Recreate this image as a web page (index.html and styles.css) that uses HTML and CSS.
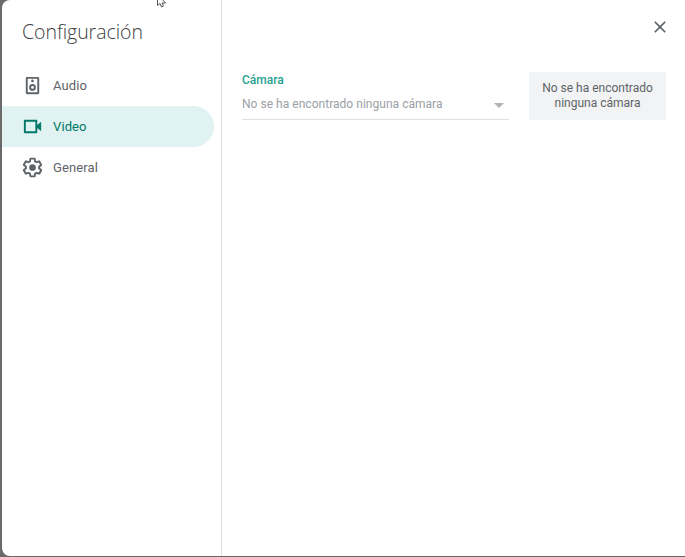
FILE: index.html
```html
<!DOCTYPE html>
<html lang="es">
<head>
<meta charset="utf-8">
<title>Configuración</title>
<link rel="stylesheet" href="styles.css">
</head>
<body>
<div class="dialog">
  <aside class="sidebar">
    <h1 class="title">Configuración</h1>
    <nav class="nav">
      <a class="nav-item">
        <svg class="icon" viewBox="0 0 24 24"><path fill="#5f6368" d="M6.500 3h11A1.500 1.500 0 0 1 19 4.500v15a1.500 1.500 0 0 1-1.500 1.500h-11A1.500 1.500 0 0 1 5 19.500v-15A1.500 1.500 0 0 1 6.500 3zM7 5v14h10V5H7zM12 5.800a1.400 1.400 0 1 1 0 2.800 1.400 1.400 0 0 1 0-2.800zM12 10.500a3.500 3.500 0 1 1 0 7 3.500 3.500 0 0 1 0-7zm0 2a1.500 1.500 0 1 0 0 3 1.500 1.500 0 0 0 0-3z" fill-rule="evenodd"/></svg>
        <span>Audio</span>
      </a>
      <a class="nav-item active">
        <svg class="icon" viewBox="0 0 24 24"><path fill="#00796b" fill-rule="evenodd" d="M4 5h12a1 1 0 0 1 1 1v4.500L21 7v10l-4-3.500V18a1 1 0 0 1-1 1H4a1 1 0 0 1-1-1V6a1 1 0 0 1 1-1zm1 2v10h10V7H5z"/></svg>
        <span>Video</span>
      </a>
      <a class="nav-item">
        <svg class="icon" viewBox="0 0 24 24"><path fill="#5f6368" d="M13.850 22.250h-3.700c-.74 0-1.360-.54-1.470-1.270l-.27-1.890c-.27-.14-.53-.29-.79-.46l-1.800.72c-.7.260-1.470-.03-1.810-.65L2.200 15.530c-.35-.66-.2-1.440.36-1.880l1.530-1.190c-.01-.15-.02-.3-.02-.46 0-.15.010-.31.020-.46l-1.520-1.190c-.59-.45-.74-1.260-.37-1.880l1.850-3.190c.34-.62 1.110-.9 1.790-.63l1.810.73c.26-.17.520-.32.780-.46l.27-1.910c.11-.7.730-1.250 1.460-1.250h3.700c.74 0 1.360.54 1.470 1.270l.27 1.890c.27.140.53.290.79.460l1.800-.72c.71-.26 1.480.03 1.820.65l1.840 3.180c.36.66.2 1.440-.36 1.880l-1.520 1.190c.01.15.02.3.02.46s-.01.310-.02.46l1.520 1.190c.56.45.72 1.230.37 1.860l-1.860 3.220c-.34.62-1.110.9-1.800.63l-1.800-.72c-.26.170-.52.320-.78.460l-.27 1.910c-.1.680-.72 1.220-1.450 1.220zm-3.230-2h2.760l.37-2.550.53-.22c.44-.18.880-.44 1.340-.78l.45-.34 2.380.96 1.380-2.400-2.030-1.580.07-.56c.03-.26.060-.51.060-.78s-.03-.53-.06-.78l-.07-.56 2.030-1.580-1.390-2.400-2.390.96-.45-.35c-.42-.32-.87-.58-1.330-.77l-.52-.22-.37-2.550h-2.760l-.37 2.550-.53.21c-.44.190-.88.440-1.340.790l-.45.330-2.380-.95-1.390 2.390 2.030 1.580-.07.560a7 7 0 0 0-.06.79c0 .26.020.53.060.78l.07.560-2.030 1.580 1.380 2.400 2.390-.96.45.350c.43.330.860.580 1.330.770l.53.220.38 2.550z"/><circle cx="12" cy="12" r="3.500" fill="#5f6368"/></svg>
        <span>General</span>
      </a>
    </nav>
  </aside>
  <main class="content">
    <header class="content-head">
      <button class="close" aria-label="Cerrar">
        <svg viewBox="0 0 24 24" class="close-icon"><path fill="#5f6368" d="M19 6.410 17.590 5 12 10.590 6.410 5 5 6.410 10.590 12 5 17.590 6.410 19 12 13.410 17.590 19 19 17.590 13.410 12z"/></svg>
      </button>
    </header>
    <section class="row">
      <div class="field">
        <label class="label">Cámara</label>
        <div class="select">
          <span>No se ha encontrado ninguna cámara</span>
          <i class="caret"></i>
        </div>
      </div>
      <div class="preview">No se ha encontrado ninguna cámara</div>
    </section>
  </main>
</div>
<svg class="cursor" viewBox="0 0 12 8"><path fill="#fff" stroke="#555" stroke-width="1" d="M1.500-6v11.500l2.500-2 1.500 3.500 2-1-1.500-3h3.500z"/></svg>
</body>
</html>
```

FILE: styles.css
```css
* { box-sizing: border-box; }
html, body { height: 100%; }
body {
  margin: 0;
  overflow: hidden;
  background: #6a6a6a;
  font-family: Roboto, "Liberation Sans", sans-serif;
  position: relative;
}
.dialog {
  display: flex;
  height: 556px;
  margin-left: 2px;
  background: #fff;
  border-radius: 8px 0 0 8px;
}
.sidebar {
  width: 220px;
  flex: none;
  border-right: 1px solid #e0e0e0;
  padding-right: 7px;
}
.title {
  margin: 0;
  padding: 20px 0 0 20px;
  height: 65px;
  font-size: 19.500px;
  line-height: 24px;
  font-weight: 300;
  color: #3c4043;
  font-family: "Open Sans", Roboto, sans-serif;
  letter-spacing: -.05px;
}
.nav { display: flex; flex-direction: column; }
.nav-item {
  display: flex;
  align-items: center;
  height: 41px;
  padding: 0 0 1px 19px;
  gap: 9px;
  font-size: 13px;
  font-weight: 400;
  letter-spacing: .1px;
  color: #5f6368;
  border-radius: 0 21px 21px 0;
}
.nav-item.active {
  background: #e0f2f1;
  color: #00796b;
}
.icon { width: 23px; height: 23px; flex: none; }
.content { flex: 1; padding: 0 19px 0 20px; }
.content-head {
  display: flex;
  justify-content: flex-end;
  height: 72px;
  padding-top: 17px;
}
.close {
  width: 20px;
  height: 20px;
  padding: 0;
  margin-right: -4px;
  border: 0;
  background: none;
}
.close-icon { display: block; width: 20px; height: 20px; }
.row { display: flex; align-items: flex-start; gap: 20px; }
.field { width: 267px; flex: none; }
.label {
  display: block;
  margin-top: 1px;
  font-size: 12px;
  line-height: 14px;
  font-weight: 500;
  color: #26a08f;
}
.select {
  display: flex;
  align-items: center;
  justify-content: space-between;
  height: 33px;
  padding: 2px 5px 0 0;
  font-size: 12px;
  letter-spacing: .03px;
  color: #9aa0a6;
  border-bottom: 1px solid #e0e0e0;
}
.caret {
  width: 0;
  height: 0;
  margin-top: 2px;
  border-left: 5px solid transparent;
  border-right: 5px solid transparent;
  border-top: 5px solid #b0b4b8;
}
.preview {
  flex: 1;
  height: 48px;
  display: flex;
  align-items: center;
  justify-content: center;
  padding: 0 8px;
  text-align: center;
  font-size: 12px;
  line-height: 15px;
  color: #5f6368;
  background: #f1f3f4;
}
.cursor {
  position: absolute;
  left: 156px;
  top: 0;
  width: 12px;
  height: 8px;
}
```
